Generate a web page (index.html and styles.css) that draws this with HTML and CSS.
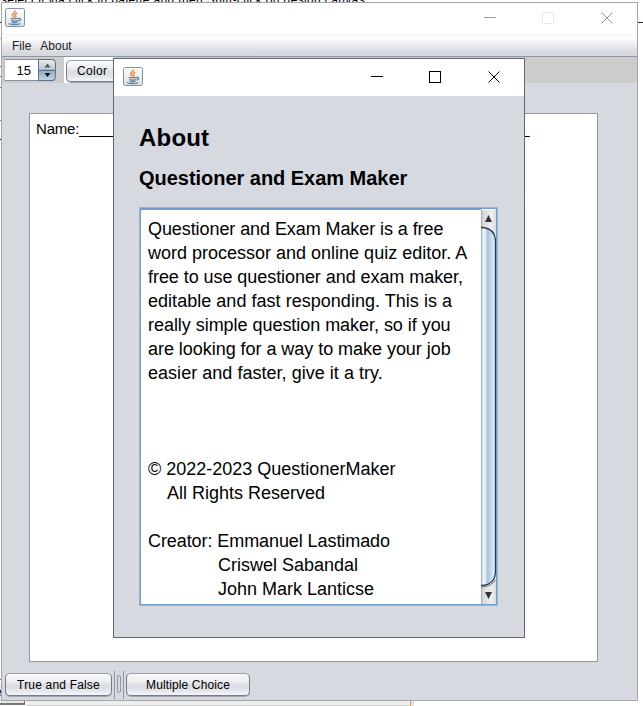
FILE: index.html
```html
<!DOCTYPE html>
<html lang="en">
<head>
<meta charset="utf-8">
<title>Questioner and Exam Maker</title>
<link rel="stylesheet" href="styles.css">
</head>
<body>
<svg width="0" height="0" class="defs">
  <defs>
    <linearGradient id="jg" x1="0" y1="0" x2="0" y2="1"><stop offset="0" stop-color="#fff"/><stop offset="1" stop-color="#dce0e4"/></linearGradient>
    <symbol id="java" viewBox="0 0 20 20">
      <rect x=".5" y=".5" width="19" height="18" rx="1.8" fill="url(#jg)" stroke="#7d94a5"/>
      <path d="M10.300 2.500c.5 2-3.200 2.800-2.700 4.700.3.900 1.200 1.500 1.400 2.300M12.300 5c-2.400 1.100-2.500 1.900-1.700 2.900.5.700.2 1.300-.5 1.800" fill="none" stroke="#e8914f" stroke-width="1.600"/>
      <path d="M5.500 10.600h8M6.200 12.600q3.500 1 6.800 0M7 14.300q2.800.8 5.400 0M13.500 10.500c3-.7 2.500 2-.1 2.600M4.500 15.300c-1.500 1.300 8.500 2 10.700.2" fill="none" stroke="#6588a5" stroke-width="1.400"/>
    </symbol>
  </defs>
</svg>
<div class="desktop">
  <div class="behind">select it via click in palette and then Shift-click on design canvas.</div>
  <i class="mark m1"></i><i class="mark m2"></i><i class="mark m3"></i><i class="mark m4"></i><i class="mark m5"></i><i class="mark m6"></i><i class="mark m7"></i><i class="mark m8"></i><i class="mark m9"></i>
  <div class="corner">e</div>
  <div class="strip"></div>

  <section class="window main">
    <header class="titlebar">
      <svg class="java" width="20" height="20"><use href="#java"/></svg>
      <svg class="controls" width="129" height="12" fill="none" shape-rendering="crispEdges">
        <path d="M0 5.500h12" stroke="#999"/><rect x="58.500" y=".5" width="11" height="11" stroke="#e8e8e8"/>
        <path d="M117.500.5l11 11M128.500.5l-11 11" stroke="#999" shape-rendering="auto"/>
      </svg>
    </header>
    <nav class="menubar"><span>File</span><span>About</span></nav>
    <div class="toolbar">
      <div class="spinner"><span class="value">15</span><span class="steps"><svg width="17" height="21"><path d="M5.500 7.500h6L8.500 3.500z" fill="#555"/><path d="M0 10.500h17" stroke="#5c7084"/><path d="M5.500 13h6l-3 4z" fill="#111"/></svg></span></div>
      <div class="colorbox"><button class="btn">Color</button></div>
    </div>
    <div class="workspace">
      <div class="paper"><span class="label">Name:</span>______________________________________________________</div>
    </div>
    <footer class="bottombar">
      <button class="btn tf">True and False</button>
      <div class="divider"><i></i></div>
      <button class="btn mc">Multiple Choice</button>
    </footer>
  </section>

  <section class="window dialog">
    <header class="titlebar">
      <svg class="java" width="20" height="20"><use href="#java"/></svg>
      <svg class="controls" width="129" height="12" fill="none" shape-rendering="crispEdges">
        <path d="M0 5.500h12" stroke="#000"/><rect x="58.500" y=".5" width="11" height="11" stroke="#000"/>
        <path d="M117.500.5l11 11M128.500.5l-11 11" stroke="#000" shape-rendering="auto"/>
      </svg>
    </header>
    <div class="content">
      <h1>About</h1>
      <h2>Questioner and Exam Maker</h2>
      <div class="scrollpane">
<pre class="text"><span class="l1">Questioner and Exam Maker is a free</span>
word processor and online quiz editor. A
<span class="l3">free to use questioner and exam maker,</span>
<span class="l4">editable and fast responding. This is a</span>
<span class="l5">really simple question maker, so if you</span>
<span class="l5">are looking for a way to make your job</span>
<span class="l4">easier and faster, give it a try.</span>



© 2022-2023 QuestionerMaker
    All Rights Reserved

<span class="l1">Creator: Emmanuel Lastimado</span>
              Criswel Sabandal
              John Mark Lanticse</pre>
        <svg class="scrollbar" width="15" height="394">
          <defs>
            <linearGradient id="tr"><stop offset="0" stop-color="#999da5"/><stop offset=".12" stop-color="#d5d8dc"/><stop offset=".7" stop-color="#edeff1"/><stop offset="1" stop-color="#d8dce0"/></linearGradient>
            <linearGradient id="th"><stop offset="0" stop-color="#8ea4b9"/><stop offset=".15" stop-color="#f1f6fa"/><stop offset=".34" stop-color="#d9e6f0"/><stop offset=".45" stop-color="#a9c3d8"/><stop offset=".8" stop-color="#cfe4f4"/><stop offset="1" stop-color="#deeefa"/></linearGradient>
          </defs>
          <rect width="15" height="394" fill="url(#tr)"/>
          <path d="M0 17.500h2Q14.500 19 14.500 32V361Q14.500 374 2 375.500H0" fill="url(#th)" stroke="#24394d" stroke-width="1.300"/>
          <path d="M0 377h2q9-1 12.500-7" fill="none" stroke="#777" stroke-width="1"/>
          <path d="M4 12h7L7.500 5z" fill="#333"/><path d="M4 382h7l-3.500 7z" fill="#333"/>
        </svg>
      </div>
    </div>
  </section>
</div>
</body>
</html>
```
FILE: styles.css
```css
* { box-sizing: border-box; }
body { margin: 0; background: #fff; font-family: "Liberation Sans", Arial, sans-serif; color: #000; }
.defs { position: absolute; }
.desktop { position: relative; width: 643px; height: 706px; overflow: hidden; }
.behind { position: absolute; left: 1px; top: -7px; font-size: 12px; line-height: 14px; letter-spacing: 0.36px; white-space: nowrap; }
.mark { position: absolute; height: 1px; width: 2px; left: 0; background: #222; }
.m1 { top: 22px; }
.m2 { top: 38px; background: #f5a623; }
.m3 { top: 66px; background: #777; }
.m4 { top: 76px; background: #777; }
.m5 { top: 87px; background: #777; }
.m6 { top: 120px; background: #777; }
.m7 { top: 139px; }
.m8 { left: 637px; top: 22px; width: 6px; }
.m9 { top: 679px; background: #777; }
.corner { position: absolute; left: 0; top: 684px; width: 25px; height: 21px; background: #e8e8e8; border-right: 1px solid #666; border-bottom: 2px solid #777; font-size: 12px; line-height: 16px; text-indent: -5px; overflow: hidden; }
.strip { position: absolute; left: 26px; top: 701px; width: 385px; height: 5px; background: linear-gradient(#eee 4px, #d0d0d0 4px); border-right: 1px solid #f5a000; box-shadow: 3px 0 #dfe0f8; }

.window { position: absolute; display: flex; flex-direction: column; background: #d6d9e0; }
.main { left: 1px; top: 2px; width: 637px; height: 699px; border: 1px solid #a6a6a8; }
.dialog { left: 113px; top: 58px; width: 412px; height: 580px; border: 1px solid #66676b; }
.titlebar { display: flex; justify-content: space-between; align-items: flex-start; background: #fff; flex: none; }
.main .titlebar { height: 31px; padding: 5px 24px 0 3px; }
.dialog .titlebar { height: 37px; padding: 8px 24px 0 9px; }
.controls { margin-top: 4px; }
.java, .controls { display: block; }

.menubar { height: 23px; flex: none; display: flex; gap: 9px; padding: 4px 0 0 10px; font-size: 12px; line-height: 16px; color: #222; background: linear-gradient(#f6f8f8 0, #fff 5px, #f2f3f5 8px, #d6d9e0 19px); border-bottom: 1px solid #9297a1; }
.toolbar { height: 26px; flex: none; display: flex; background: #ccc; padding-left: 2px; }
.spinner { display: flex; width: 52px; height: 22px; margin-top: 2px; border-radius: 0 4px 4px 0; background: #fff; border: 1px solid #888d96; border-left-color: #bbb; border-right: 0; }
.value { width: 33px; padding-right: 7px; text-align: right; font-size: 13px; line-height: 21px; }
.steps { width: 18px; height: 22px; margin-top: -1px; border: 1px solid #5d7084; border-radius: 0 4px 4px 0; background: linear-gradient(#e5ebf1, #bccad8 45%, #93a9c0 50%, #bed2e5); }
.steps svg { display: block; }
.colorbox { margin-left: 8px; width: 50px; background: #fff; padding: 3px 0 0 2px; }
.btn { display: block; font: 12px "Liberation Sans", Arial, sans-serif; color: #000; padding: 0; height: 23px; border: 1px solid #777b83; border-top-color: #999ca3; border-radius: 5px; background: linear-gradient(#fafafc, #eceef1 35%, #d9dce2 55%, #e0e3e8 75%, #f2f5fa); box-shadow: 0 1px 0 #a4a7ad; }
.colorbox .btn { width: 62px; height: 22px; text-align: left; padding-left: 10px; letter-spacing: 0.3px; }
.workspace { flex: 1; padding: 30px 39px 10px 27px; min-height: 0; }
.paper { width: 569px; height: 549px; background: #fff; border: 1px solid #9297a1; padding: 6px; font-size: 15px; line-height: 18px; white-space: nowrap; overflow: hidden; }
.label { letter-spacing: -0.2px; }
.bottombar { height: 29px; flex: none; display: flex; padding: 2px 0 0 3px; }
.tf { width: 107px; letter-spacing: 0.18px; padding-top: 1px; }
.mc { width: 124px; letter-spacing: 0.13px; padding-top: 1px; }
.divider { width: 10px; height: 28px; margin: -2px 2px 0 2px; border-left: 1px solid #92969f; border-right: 1px solid #92969f; padding: 4px 2px; }
.divider i { display: block; width: 4px; height: 18px; border: 1px solid #92969f; border-radius: 2px; }

.content { padding: 27px 25px 0; }
h1 { margin: 0; font-size: 24px; line-height: 30px; letter-spacing: 0.2px; }
h2 { margin: 12px 0 0; font-size: 20px; line-height: 26px; letter-spacing: -0.03px; white-space: nowrap; }
.scrollpane { display: flex; width: 359px; height: 399px; margin-top: 16px; border: 1px solid #98b5d5; box-shadow: inset 0 0 0 1px #739dcb; padding: 1px; background: #fff; }
.text { flex: 1; margin: 0; padding: 7px 0 0 7px; font: 18px/24px "Liberation Sans", Arial, sans-serif; overflow: hidden; height: 394px; border-top: 1px solid #9297a1; }
.l1 { letter-spacing: -0.08px; }
.l3 { letter-spacing: -0.06px; }
.l4 { letter-spacing: 0.03px; }
.l5 { letter-spacing: -0.04px; }
.scrollbar { flex: none; margin-top: 1px; }
```
